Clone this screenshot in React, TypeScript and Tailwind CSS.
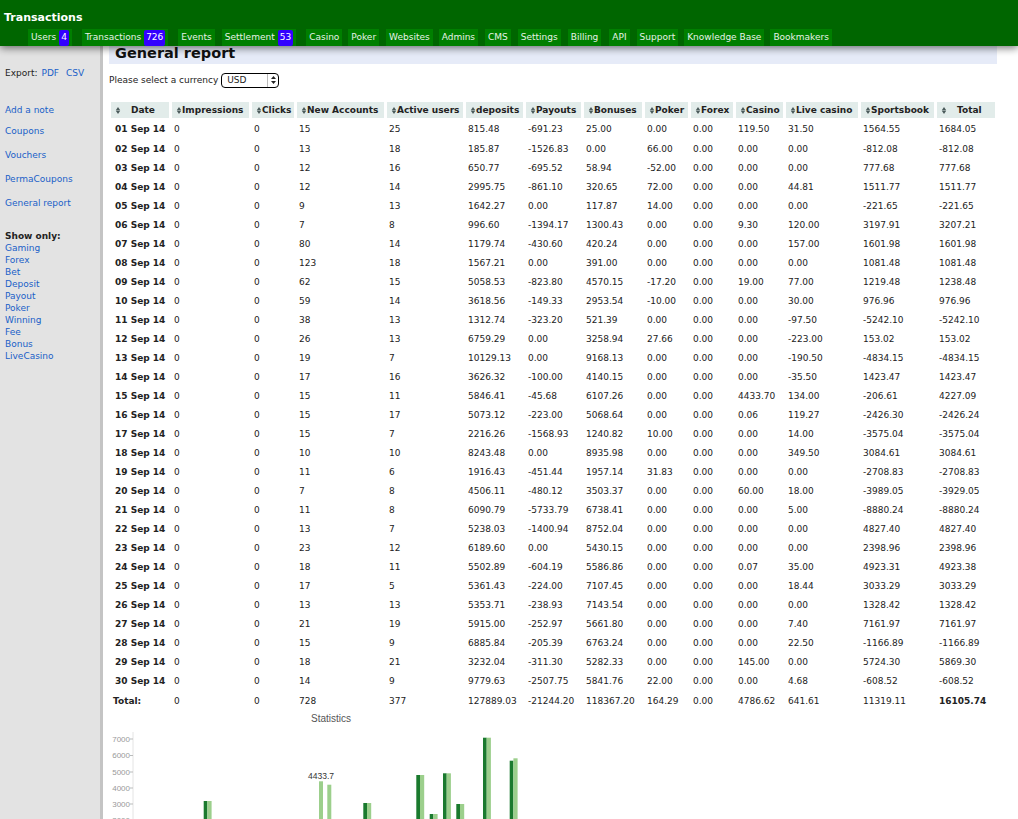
const font = "font-['DejaVu_Sans',Verdana,sans-serif]";

const tabs = [
  { label: "Users", badge: "4", cls: "ml-[28px]" },
  { label: "Transactions", badge: "726", cls: "ml-[10px]" },
  { label: "Events", cls: "ml-[10px]" },
  { label: "Settlement", badge: "53", cls: "ml-[7px]" },
  { label: "Casino", cls: "ml-[10px]" },
  { label: "Poker", cls: "ml-[6px]" },
  { label: "Websites", cls: "ml-[7px]" },
  { label: "Admins", cls: "ml-[6px]" },
  { label: "CMS", cls: "ml-[7px]" },
  { label: "Settings", cls: "ml-[7px]" },
  { label: "Billing", cls: "ml-[7px]" },
  { label: "API", cls: "ml-[8px]" },
  { label: "Support", cls: "ml-[7px]" },
  { label: "Knowledge Base", cls: "ml-[6px]" },
  { label: "Bookmakers", cls: "ml-[6px]" },
];

const columns = [
  { label: "Date", w: "w-[58px]", wide: true },
  { label: "Impressions", w: "w-[77px]" },
  { label: "Clicks", w: "w-[42px]" },
  { label: "New Accounts", w: "w-[87px]" },
  { label: "Active users", w: "w-[76px]" },
  { label: "deposits", w: "w-[57px]" },
  { label: "Payouts", w: "w-[55px]" },
  { label: "Bonuses", w: "w-[58px]" },
  { label: "Poker", w: "w-[43px]" },
  { label: "Forex", w: "w-[42px]" },
  { label: "Casino", w: "w-[47px]" },
  { label: "Live casino", w: "w-[72px]" },
  { label: "Sportsbook", w: "w-[73px]" },
  { label: "Total", w: "w-[58px]", wide: true },
];

const rows = `15 25 815.48 -691.23 25.00 0.00 0.00 119.50 31.50 1564.55 1684.05
13 18 185.87 -1526.83 0.00 66.00 0.00 0.00 0.00 -812.08 -812.08
12 16 650.77 -695.52 58.94 -52.00 0.00 0.00 0.00 777.68 777.68
12 14 2995.75 -861.10 320.65 72.00 0.00 0.00 44.81 1511.77 1511.77
9 13 1642.27 0.00 117.87 14.00 0.00 0.00 0.00 -221.65 -221.65
7 8 996.60 -1394.17 1300.43 0.00 0.00 9.30 120.00 3197.91 3207.21
80 14 1179.74 -430.60 420.24 0.00 0.00 0.00 157.00 1601.98 1601.98
123 18 1567.21 0.00 391.00 0.00 0.00 0.00 0.00 1081.48 1081.48
62 15 5058.53 -823.80 4570.15 -17.20 0.00 19.00 77.00 1219.48 1238.48
59 14 3618.56 -149.33 2953.54 -10.00 0.00 0.00 30.00 976.96 976.96
38 13 1312.74 -323.20 521.39 0.00 0.00 0.00 -97.50 -5242.10 -5242.10
26 13 6759.29 0.00 3258.94 27.66 0.00 0.00 -223.00 153.02 153.02
19 7 10129.13 0.00 9168.13 0.00 0.00 0.00 -190.50 -4834.15 -4834.15
17 16 3626.32 -100.00 4140.15 0.00 0.00 0.00 -35.50 1423.47 1423.47
15 11 5846.41 -45.68 6107.26 0.00 0.00 4433.70 134.00 -206.61 4227.09
15 17 5073.12 -223.00 5068.64 0.00 0.00 0.06 119.27 -2426.30 -2426.24
15 7 2216.26 -1568.93 1240.82 10.00 0.00 0.00 14.00 -3575.04 -3575.04
10 10 8243.48 0.00 8935.98 0.00 0.00 0.00 349.50 3084.61 3084.61
11 6 1916.43 -451.44 1957.14 31.83 0.00 0.00 0.00 -2708.83 -2708.83
7 8 4506.11 -480.12 3503.37 0.00 0.00 60.00 18.00 -3989.05 -3929.05
11 8 6090.79 -5733.79 6738.41 0.00 0.00 0.00 5.00 -8880.24 -8880.24
13 7 5238.03 -1400.94 8752.04 0.00 0.00 0.00 0.00 4827.40 4827.40
23 12 6189.60 0.00 5430.15 0.00 0.00 0.00 0.00 2398.96 2398.96
18 11 5502.89 -604.19 5586.86 0.00 0.00 0.07 35.00 4923.31 4923.38
17 5 5361.43 -224.00 7107.45 0.00 0.00 0.00 18.44 3033.29 3033.29
13 13 5353.71 -238.93 7143.54 0.00 0.00 0.00 0.00 1328.42 1328.42
21 19 5915.00 -252.97 5661.80 0.00 0.00 0.00 7.40 7161.97 7161.97
15 9 6885.84 -205.39 6763.24 0.00 0.00 0.00 22.50 -1166.89 -1166.89
18 21 3232.04 -311.30 5282.33 0.00 0.00 145.00 0.00 5724.30 5869.30
14 9 9779.63 -2507.75 5841.76 22.00 0.00 0.00 4.68 -608.52 -608.52`
  .split("\n")
  .map((r) => r.split(" "));

const totals = "728 377 127889.03 -21244.20 118367.20 164.29 0.00 4786.62 641.61 11319.11".split(" ");

const showOnly = ["Gaming", "Forex", "Bet", "Deposit", "Payout", "Poker", "Winning", "Fee", "Bonus", "LiveCasino"];

const SortIcon = () => (
  <svg width="6" height="7" viewBox="0 0 6 7" className="inline-block shrink-0">
    <path d="M3 0 L5.2 3.2 L0.8 3.2 Z M3 7 L0.8 3.8 L5.2 3.8 Z" fill="#4a5a5a" />
  </svg>
);

const Chart = () => {
  const ticks = [
    { y: 739, t: "7000" },
    { y: 755.5, t: "6000" },
    { y: 772, t: "5000" },
    { y: 788, t: "4000" },
    { y: 804, t: "3000" },
    { y: 820, t: "2000" },
  ];
  const pairs = [
    { x: 203.7, d: 801, l: 801 },
    { x: 363.3, d: 803, l: 803 },
    { x: 416.3, d: 775, l: 775 },
    { x: 429.7, d: 814, l: 814 },
    { x: 443, d: 773.3, l: 773.3 },
    { x: 456.3, d: 804, l: 804 },
    { x: 483, d: 737.7, l: 737.7 },
    { x: 509.7, d: 760.7, l: 758.3 },
  ];
  return (
    <svg width="460" height="110" viewBox="100 710 460 110" className="-mt-[2px] -ml-[9px] block">
      <text x="331" y="722" fontSize="10" textAnchor="middle" fill="#555" fontFamily="Liberation Sans">
        Statistics
      </text>
      <line x1="133" y1="732" x2="133" y2="820" stroke="#e4e4e4" />
      {ticks.map((t) => (
        <g key={t.t}>
          <line x1="130" y1={t.y} x2="133" y2={t.y} stroke="#bbb" />
          <text x="130" y={t.y + 2.5} fontSize="8" textAnchor="end" fill="#999" fontFamily="Liberation Sans">
            {t.t}
          </text>
        </g>
      ))}
      {pairs.map((p) => (
        <g key={p.x}>
          <rect x={p.x} y={p.d} width="3.7" height={820 - p.d} fill="#1a7a2e" />
          <rect x={p.x + 3.7} y={p.l} width="4.2" height={820 - p.l} fill="#9ccf8c" />
        </g>
      ))}
      <rect x="319" y="781.3" width="4" height="39" fill="#9ccf8c" />
      <rect x="327.3" y="784.7" width="4" height="36" fill="#9ccf8c" />
      <text x="321" y="779" fontSize="8.5" textAnchor="middle" fill="#333" fontFamily="Liberation Sans">
        4433.7
      </text>
    </svg>
  );
};

export default function App() {
  return (
    <div className={`${font} h-[819px] w-full overflow-hidden bg-white text-[9px] text-[#222]`}>
      <header className="relative z-10 flex h-[46px] flex-col justify-end bg-[#006600] shadow-[0_2px_8px_rgba(0,0,0,0.55)]">
        <div className="pb-[4px] pl-1 text-[11px] leading-[14px] font-bold text-white">Transactions</div>
        <nav className="flex h-[17px]">
          {tabs.map((t) => (
            <a
              key={t.label}
              className={`${t.cls} flex h-[17px] items-center bg-[#007f00] px-[3px] pt-px text-[9px] whitespace-nowrap text-[#e6f2e6]`}
            >
              {t.label}
              {t.badge && (
                <span className="-mt-px ml-[3px] flex h-[16px] items-center rounded-[2px] bg-[#3300ff] px-[2px] text-white">
                  {t.badge}
                </span>
              )}
            </a>
          ))}
        </nav>
      </header>

      <div className="flex">
        <aside className="h-[773px] w-[103px] shrink-0 border-r-[3px] border-[#c4c4c4] bg-[#e3e3e3] pl-[5px]">
          <div className="mt-[21px] flex gap-[4px] leading-[12px]">
            <span>Export:</span>
            <a className="text-[#1a5fc8]">PDF</a>
            <a className="ml-[3px] text-[#1a5fc8]">CSV</a>
          </div>
          <div className="mt-[25px] flex flex-col gap-[12px] leading-[12px] text-[#1a5fc8]">
            <a className="mb-[-3px]">Add a note</a>
            <a>Coupons</a>
            <a>Vouchers</a>
            <a>PermaCoupons</a>
            <a>General report</a>
          </div>
          <div className="mt-[21px] leading-[12px] font-bold">Show only:</div>
          <div className="flex flex-col leading-[12px] text-[#1a5fc8]">
            {showOnly.map((s) => (
              <a key={s}>{s}</a>
            ))}
          </div>
        </aside>

        <main className="min-w-0 flex-1 pl-[6px]">
          <h1 className="h-[18px] w-[888px] bg-[#e6ebf8] pl-[6px] text-[14.5px] leading-[15px] font-bold text-[#111]">
            General report
          </h1>
          <div className="mt-[8px] flex h-[16px] items-center leading-[12px]">
            Please select a currency
            <span className="ml-[3px] flex h-[15px] w-[58px] items-center justify-between rounded-[4px] border border-black bg-white pr-[2px] pl-[5px]">
              USD
              <span className="flex h-full items-center border-l border-[#bbb] pl-[3px]">
                <svg width="5" height="8" viewBox="0 0 5 8">
                  <path d="M2.5 0 L5 3 L0 3 Z M2.5 8 L0 5 L5 5 Z" fill="#222" />
                </svg>
              </span>
            </span>
          </div>

          <table className="mt-[14px] -ml-px w-[890px] table-fixed border-separate border-spacing-x-[3px] border-spacing-y-0">
            <thead>
              <tr>
                {columns.map((c) => (
                  <th key={c.label} className={`${c.w} h-[16px] bg-[#e2ecea] p-0 font-bold whitespace-nowrap`}>
                    <div className={`flex items-center pt-px pl-[4px] ${c.wide ? "gap-[10px]" : ""}`}>
                      <SortIcon />
                      {c.label}
                    </div>
                  </th>
                ))}
              </tr>
            </thead>
            <tbody>
              {rows.map((r, i) => (
                <tr key={i} className={i === 0 ? "h-[22px] align-top [&>td]:pt-[5px]" : "h-[19.03px]"}>
                  <td className="pl-[4px] font-bold whitespace-nowrap">{String(i + 1).padStart(2, "0")} Sep 14</td>
                  <td className="pl-[2px]">0</td>
                  <td className="pl-[2px]">0</td>
                  {r.map((v, j) => (
                    <td key={j} className="pl-[2px] whitespace-nowrap">
                      {v}
                    </td>
                  ))}
                </tr>
              ))}
              <tr className="h-[21px]">
                <td className="pl-[2px] font-bold">Total:</td>
                <td className="pl-[2px]">0</td>
                <td className="pl-[2px]">0</td>
                {totals.map((v, j) => (
                  <td key={j} className="pl-[2px] whitespace-nowrap">
                    {v}
                  </td>
                ))}
                <td className="pl-[2px] font-bold">16105.74</td>
              </tr>
            </tbody>
          </table>
          <Chart />
        </main>
      </div>
    </div>
  );
}
